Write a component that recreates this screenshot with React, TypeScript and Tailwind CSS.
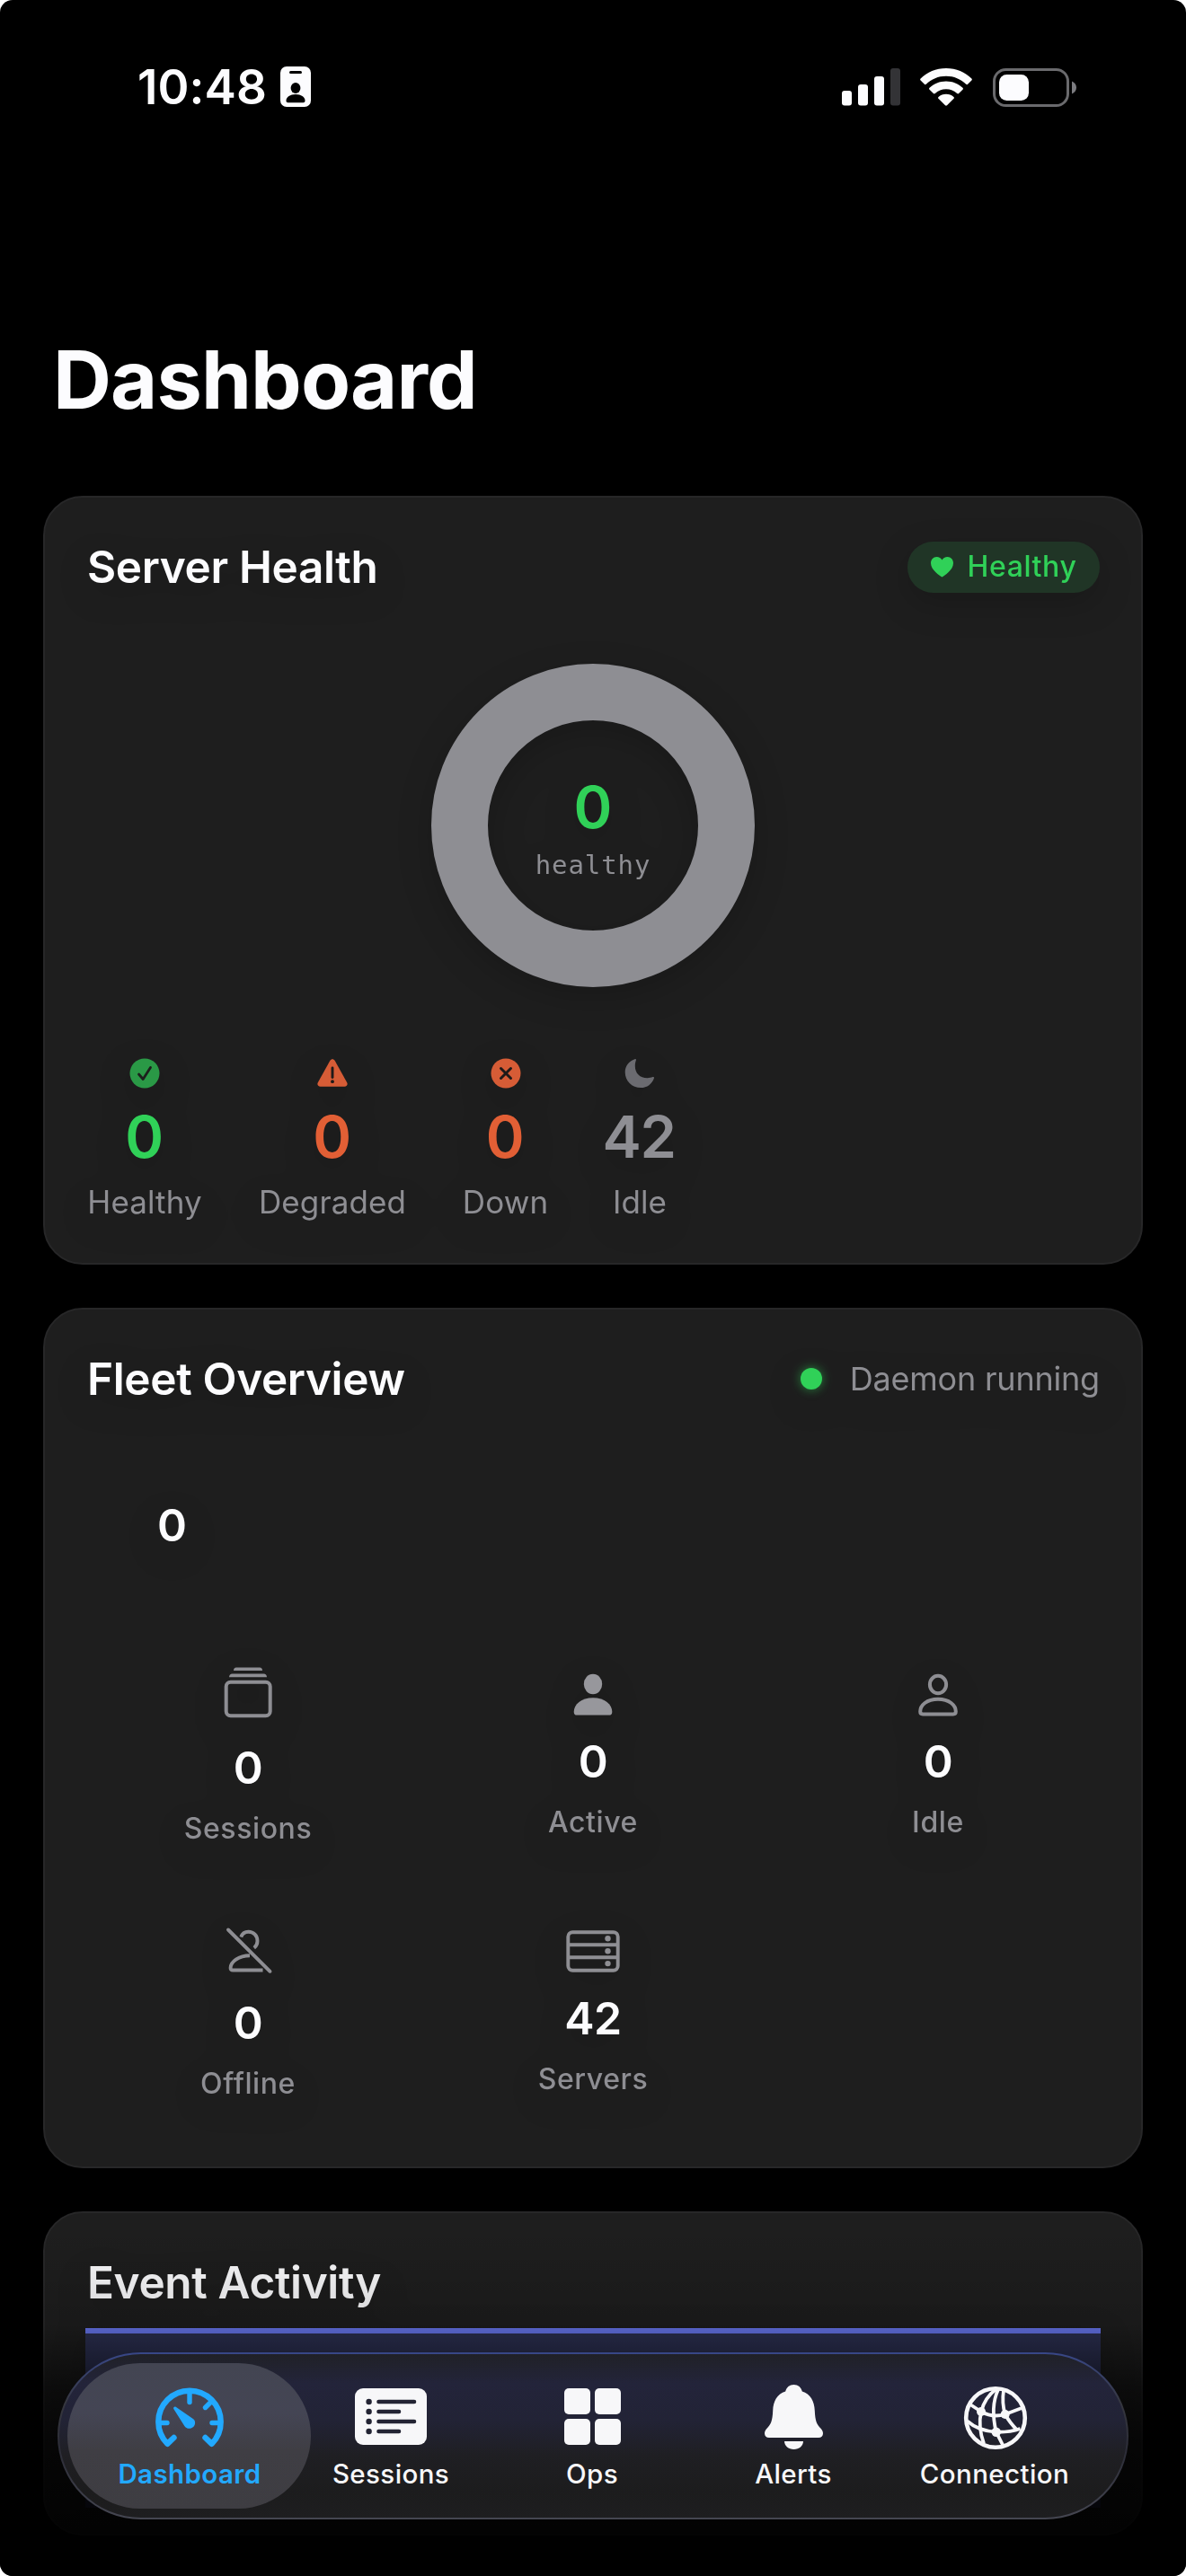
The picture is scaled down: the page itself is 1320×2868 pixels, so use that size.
import type { ReactNode } from 'react';

// Status bar icons
const BadgeIcon = () => (
  <svg width="34" height="46" viewBox="0 0 34 46">
    <rect width="34" height="45" rx="7" fill="#fcfcfe" />
    <rect x="10" y="5" width="14" height="3" rx="1.500" fill="#000" />
    <ellipse cx="17" cy="24" rx="5.400" ry="6" fill="#000" />
    <path d="M6.500 38c0-4 4.500-7 10.500-7s10.500 3 10.500 7c0 1.500-.8 2.200-2 2.200h-17c-1.200 0-2-.7-2-2.200z" fill="#000" />
  </svg>
);

const SignalIcon = () => (
  <svg width="65" height="42" viewBox="0 0 65 42">
    <rect x="0" y="25" width="11" height="16.500" rx="3" fill="#fcfcfe" />
    <rect x="18" y="18" width="11" height="23.500" rx="3" fill="#fcfcfe" />
    <rect x="36" y="9" width="11" height="32.500" rx="3" fill="#fcfcfe" />
    <rect x="54" y="0" width="11" height="41.500" rx="3" fill="#333336" />
  </svg>
);

const WifiIcon = () => (
  <svg width="58" height="42" viewBox="0 0 58 42" fill="#fcfcfe">
    <path d="M29 0C17.800 0 7.700 4.400 .6 11.500c-.6.6-.6 1.300 0 1.900l4.300 4.400c.6.6 1.300.6 1.900 0C12.500 12.200 20.300 8.800 29 8.800s16.500 3.400 22.200 9c.6.6 1.300.6 1.900 0l4.300-4.400c.6-.6.6-1.300 0-1.900C50.300 4.400 40.200 0 29 0z" />
    <path d="M29 14.500c-7.200 0-13.700 2.800-18.500 7.300-.6.6-.6 1.300 0 1.900l4.400 4.400c.6.6 1.200.6 1.900 0 3.200-3 7.500-4.800 12.200-4.800s9 1.800 12.200 4.800c.7.6 1.300.6 1.900 0l4.400-4.400c.6-.6.6-1.300 0-1.900-4.800-4.500-11.300-7.300-18.500-7.300z" />
    <path d="M29 28.800c-3.300 0-6.200 1.200-8.500 3.100-.6.5-.6 1.300 0 1.900l7.500 7.500c.6.6 1.400.6 2 0l7.500-7.500c.6-.6.6-1.400 0-1.900-2.300-1.900-5.200-3.100-8.500-3.100z" />
  </svg>
);

const BatteryIcon = () => (
  <svg width="93" height="43" viewBox="0 0 93 43">
    <rect x="1.500" y="1.500" width="82" height="40" rx="13" fill="none" stroke="#6a6a6d" strokeWidth="3" />
    <rect x="7" y="7" width="33" height="29" rx="8.500" fill="#fcfcfe" />
    <path d="M88 14.500c3 1.300 5 4 5 7s-2 5.700-5 7z" fill="#7c7c80" />
  </svg>
);

// Health row icons
const CheckCircle = () => (
  <svg width="34" height="34" viewBox="0 0 34 34">
    <circle cx="17" cy="17" r="16.500" fill="#2a9946" />
    <path d="M10.500 18l4.700 5.500 8.300-13" fill="none" stroke="#1c1f1c" strokeWidth="2.800" strokeLinecap="round" strokeLinejoin="round" />
  </svg>
);

const WarningTriangle = () => (
  <svg width="34" height="34" viewBox="0 0 34 34">
    <path d="M14.400 2.700c1.200-2.100 4-2.100 5.200 0l13.600 24.500c1.200 2.200-.3 4.600-2.700 4.600h-27c-2.400 0-3.900-2.400-2.700-4.600z" fill="#d65c36" />
    <path d="M17 11v10.500" stroke="#1e1a19" strokeWidth="2.900" strokeLinecap="round" />
    <circle cx="17" cy="26.200" r="1.900" fill="#1e1a19" />
  </svg>
);

const XCircle = () => (
  <svg width="34" height="34" viewBox="0 0 34 34">
    <circle cx="17" cy="17" r="16.500" fill="#d65c36" />
    <path d="M11.500 11.500l11 11M22.500 11.500l-11 11" stroke="#1e1a19" strokeWidth="3" strokeLinecap="round" />
  </svg>
);

const MoonIcon = () => (
  <svg width="34" height="34" viewBox="0 0 34 34">
    <path d="M11.500 1.200c.9-.4 1.700.3 1.400 1.300-.8 2.200-1.100 4-1.100 6.200 0 8.300 5.400 13.500 13.700 13.500 2.200 0 4.300-.4 6-1.100 1-.4 1.800.4 1.400 1.300C30.700 28.700 25.300 33 18.300 33 8.300 33 .7 25.500 .7 15.700c0-6.700 4.300-12.300 10.800-14.500z" fill="#6b6b70" />
  </svg>
);

// Fleet icons
const StackIcon = () => (
  <svg width="54" height="64" viewBox="0 0 54 64">
    <path d="M11 5c0-2 1-3.500 3-3.500h26c2 0 3 1.500 3 3.500zM6 12.200c0-2 1.500-3.700 3.500-3.700h35c2 0 3.500 1.700 3.500 3.700z" fill="#8e8e93" />
    <rect x="2.700" y="17.800" width="49" height="37.400" rx="5" fill="none" stroke="#8e8e93" strokeWidth="4" />
  </svg>
);

const PersonFill = () => (
  <svg width="44" height="50" viewBox="0 0 44 50" fill="#97979c">
    <ellipse cx="22" cy="13" rx="10.200" ry="11.200" />
    <path d="M.7 44C.7 35.500 9 28.200 22 28.200S43.300 35.500 43.300 44c0 2.500-1.200 3.600-3.600 3.600H4.300C1.900 47.600 .7 46.500 .7 44z" />
  </svg>
);

const PersonOutline = () => (
  <svg width="44" height="50" viewBox="0 0 44 50" fill="none" stroke="#8e8e93" strokeWidth="4">
    <ellipse cx="22" cy="13.500" rx="9.100" ry="9.700" />
    <path d="M2.200 43.500C2.200 36.500 9.500 29.800 22 29.800S41.800 36.500 41.800 43.500c0 2-.9 2.900-2.900 2.900H5.100C3.100 46.400 2.200 45.500 2.200 43.500z" />
  </svg>
);

const PersonSlash = () => (
  <svg width="56" height="60" viewBox="0 0 56 60" fill="none" stroke="#8e8e93" strokeWidth="3.900">
    <path d="M6 5.500l46.500 46.300" strokeLinecap="round" />
    <path d="M20.300 13.600C21.500 10 24.800 7.700 28.500 7.700c5.800 0 10 4.600 10 10.300 0 3.200-1.500 6-3.700 7.700" />
    <path d="M30 34.200C17.500 34.200 8.600 41.500 8.600 48c0 1.700 1 2.500 2.600 2.500H44.500" />
  </svg>
);

const ServerRack = () => (
  <svg width="60" height="50" viewBox="0 0 60 50" fill="none" stroke="#8e8e93" strokeWidth="3.900">
    <rect x="2.300" y="3.200" width="55.400" height="42.600" rx="5" />
    <path d="M2 17.300h56M2 31.200h56" />
    <g fill="#8e8e93" stroke="none">
      <circle cx="46.500" cy="10.300" r="3.200" />
      <circle cx="46.500" cy="24.200" r="3.200" />
      <circle cx="46.500" cy="38.100" r="3.200" />
    </g>
  </svg>
);

// Tab bar icons
const GaugeIcon = () => (
  <svg width="76" height="72" viewBox="0 -4 76 72" fill="none" stroke="#22a9ff" strokeWidth="6.400" strokeLinecap="round" strokeLinejoin="round">
    <path d="M20.500 55L13.300 61.800A34.700 34.700 0 1 1 62.700 61.800L55.500 55" />
    <path d="M38 5v10.500M72 38.500H63M4 38.500H13M61 16l-5.500 5.500" strokeWidth="5.400" />
    <path d="M22.700 20.700c-1.400-1-3.300.7-2.400 2.200L32.300 42c1.500 2.500 4.500 3.400 7.400 2.500 3.900-1.200 5.600-5.800 3.500-9.200-.4-.7-1-1.200-1.700-1.600z" fill="#22a9ff" stroke="none" />
  </svg>
);

const ListIcon = () => (
  <svg width="80" height="72" viewBox="0 -4 80 72">
    <rect width="80" height="63" rx="9" fill="#f7f7f9" />
    <g stroke="#232434" strokeWidth="4.600" strokeLinecap="round">
      <path d="M26.500 15h39.500M26.500 26h22.500M26.500 37h39.500M26.500 48h22.500" />
    </g>
    <g fill="#232434">
      <circle cx="15.600" cy="15" r="3.200" />
      <circle cx="15.600" cy="26" r="3.200" />
      <circle cx="15.600" cy="37" r="3.200" />
      <circle cx="15.600" cy="48" r="3.200" />
    </g>
  </svg>
);

const GridIcon = () => (
  <svg width="63" height="72" viewBox="0 -4 63 72" fill="#f7f7f9">
    <rect x="0" y="0" width="29" height="29" rx="5" />
    <rect x="34" y="0" width="29" height="29" rx="5" />
    <rect x="0" y="34" width="29" height="29" rx="5" />
    <rect x="34" y="34" width="29" height="29" rx="5" />
  </svg>
);

const BellIcon = () => (
  <svg width="65" height="72" viewBox="0 0 65 72" fill="#f7f7f9">
    <path d="M32.500 0c-4.800 0-8.300 3-9.300 7.600C14 10.500 9.600 18.500 9.200 29 8.700 40.500 7 44 2.500 48.700.9 50.400 0 52.300 0 54.300 0 57.200 1.900 59 5 59h55c3.100 0 5-1.800 5-4.700 0-2-.9-3.900-2.500-5.600C58 44 56.300 40.500 55.800 29 55.400 18.500 51 10.500 41.800 7.600 40.800 3 37.300 0 32.500 0z" />
    <path d="M22 63h21c0 5-4.600 9-10.500 9S22 68 22 63z" />
  </svg>
);

const NetworkGlobe = () => (
  <svg width="70" height="72" viewBox="-1 -2 70 72" fill="none" stroke="#f7f7f9" strokeWidth="3.800" className="overflow-visible">
    <circle cx="35" cy="35" r="32.800" strokeWidth="4.600" />
    <path d="M35.500 3C27 9.500 21.500 18 19 28M38 3.500C31.500 17 32 35 35.700 50.700M44 4.500C42.500 14 43 22 45.700 31" />
    <path d="M6 19.500L19 28C27 32.500 37 33.500 45.700 31L65.500 23.500" />
    <path d="M3.500 38.500C12 46 24 50 35.700 50.700C45 51 54 50 62.500 47" />
    <path d="M19 28C16.500 39 17.500 51 22 63.500M45.700 31C49.500 38 54 43.500 59.500 49M35.700 50.700L43.500 66" />
    <g fill="#f7f7f9" stroke="none">
      <circle cx="19" cy="28" r="5" />
      <circle cx="45.700" cy="31" r="5" />
      <circle cx="35.700" cy="50.700" r="5.200" />
    </g>
  </svg>
);

const healthStats = [
  { label: 'Healthy', value: 0, color: 'text-[#30d158]', width: 'w-[130px]', icon: <CheckCircle /> },
  { label: 'Degraded', value: 0, color: 'text-[#e25f35]', width: 'w-[166px]', icon: <WarningTriangle /> },
  { label: 'Down', value: 0, color: 'text-[#e25f35]', width: 'w-[97px]', icon: <XCircle /> },
  { label: 'Idle', value: 42, color: 'text-[#8e8e93]', width: 'w-[80px]', icon: <MoonIcon /> },
];

const fleetStats = [
  { label: 'Sessions', value: 0, icon: <StackIcon /> },
  { label: 'Active', value: 0, icon: <PersonFill /> },
  { label: 'Idle', value: 0, icon: <PersonOutline /> },
  { label: 'Offline', value: 0, icon: <PersonSlash /> },
  { label: 'Servers', value: 42, icon: <ServerRack /> },
];

const tabs = [
  { label: 'Dashboard', icon: <GaugeIcon />, active: true },
  { label: 'Sessions', icon: <ListIcon /> },
  { label: 'Ops', icon: <GridIcon /> },
  { label: 'Alerts', icon: <BellIcon /> },
  { label: 'Connection', icon: <NetworkGlobe /> },
];

function Card({ className, children }: { className: string; children: ReactNode }) {
  return (
    <section className={`mx-12 rounded-[44px] border-2 border-[#272728] bg-[#1e1e1e] px-[46px] pt-[46px] ${className}`}>
      <div className="drop-shadow-[0_12px_18px_rgba(0,0,0,0.18)]">{children}</div>
    </section>
  );
}

function CardTitle({ children }: { children: ReactNode }) {
  return (
    <h2 className="pl-px text-[49.500px] leading-[62px] font-semibold tracking-[-0.35px] whitespace-nowrap text-[#fcfcfe]">
      {children}
    </h2>
  );
}

export default function App() {
  return (
    <div className="bg-white">
      <div className="relative h-[2868px] w-[1320px] overflow-hidden rounded-[14px] bg-black font-['Inter',sans-serif]">
        {/* Status bar */}
        <div className="flex h-[194px] items-center justify-between pr-[122px] pl-[153px]">
          <div className="flex items-center gap-[15px]">
            <span className="text-[53px] leading-none font-semibold tracking-[0.1px] text-[#fcfcfe]">10:48</span>
            <BadgeIcon />
          </div>
          <div className="flex items-center">
            <SignalIcon />
            <div className="ml-[22px]"><WifiIcon /></div>
            <div className="ml-[23px]"><BatteryIcon /></div>
          </div>
        </div>

        <h1 className="mt-[169px] pl-[59px] text-[90px] leading-[120px] font-bold tracking-[-0.9px] text-[#fcfcfe]">
          Dashboard
        </h1>

        {/* Server health */}
        <Card className="mt-[69px] h-[856px]">
          <div className="flex h-[62px] items-center justify-between">
            <CardTitle>Server Health</CardTitle>
            <div className="flex h-[57px] w-[214px] items-center justify-center gap-[16px] rounded-full bg-[#203526]">
              <svg width="25" height="23" viewBox="0 0 25 23">
                <path d="M12.500 22.500C10 21 0 14.500 0 7 0 3 2.800 0 6.500 0c2.600 0 4.800 1.300 6 3.500C13.700 1.300 15.900 0 18.500 0 22.200 0 25 3 25 7c0 7.500-10 14-12.500 15.500z" fill="#30d158" />
              </svg>
              <span className="text-[32px] leading-none font-medium tracking-[0.6px] text-[#30d158]">Healthy</span>
            </div>
          </div>

          <div className="mx-auto mt-[77px] flex h-[360px] w-[360px] flex-col items-center rounded-full border-[63px] border-[#8e8e93] pt-[67px]">
            <span className="text-[65px] leading-[60px] font-semibold text-[#30d158]">0</span>
            <span className="mt-[14px] font-['DejaVu_Sans_Mono',monospace] text-[29px] leading-[40px] tracking-[0.9px] text-[#8e8e93]">healthy</span>
          </div>

          <div className="mt-[79px] flex gap-[61px]">
            {healthStats.map((stat) => (
              <div key={stat.label} className={`flex flex-col items-center ${stat.width}`}>
                {stat.icon}
                <span className={`mt-[24px] pr-[2px] text-[65px] leading-[60px] font-semibold tracking-[-1.5px] ${stat.color}`}>{stat.value}</span>
                <span className="mt-[22px] text-[35px] leading-[40px] tracking-[0.1px] text-[#8e8e93]">{stat.label}</span>
              </div>
            ))}
          </div>
        </Card>

        {/* Fleet overview */}
        <Card className="mt-12 h-[958px]">
          <div className="flex h-[62px] items-center justify-between">
            <CardTitle>Fleet Overview</CardTitle>
            <div className="flex items-center gap-[31px]">
              <div className="h-6 w-6 rounded-full bg-[#30d158] shadow-[0_0_12px_rgba(48,209,88,0.6)]" />
              <span className="text-[36px] leading-[40px] tracking-[-0.2px] text-[#8e8e93]">Daemon running</span>
            </div>
          </div>

          <div className="flex h-[264px] w-[191px] items-center justify-center">
            <span className="text-[50px] leading-[60px] font-semibold text-[#fcfcfe]">0</span>
          </div>

          <div className="mt-[25px] grid grid-cols-3 items-center gap-x-6 gap-y-[88px]">
            {fleetStats.map((stat) => (
              <div key={stat.label} className="flex flex-col items-center">
                {stat.icon}
                <span className="mt-[19px] text-[50px] leading-[60px] font-semibold tracking-[-0.5px] text-[#fcfcfe]">{stat.value}</span>
                <span className="mt-[18px] -mb-px text-[32px] leading-[40px] font-medium tracking-[0.6px] text-[#8e8e93]">{stat.label}</span>
              </div>
            ))}
          </div>
        </Card>

        {/* Event activity */}
        <Card className="mt-12 h-[361px]">
          <div className="flex h-[62px] items-center">
            <CardTitle>Event Activity</CardTitle>
          </div>
          <div className="-mx-px mt-[20px] h-[200px] border-t-[6px] border-[#6674ec] bg-[#2c3052]" />
        </Card>

        {/* Scroll edge fade under the tab bar */}
        <div className="absolute inset-x-0 bottom-0 h-[388px] bg-[linear-gradient(to_bottom,transparent_0%,rgba(0,0,0,0.15)_28%,rgba(0,0,0,0.6)_46%,rgba(0,0,0,0.8)_62%,rgba(0,0,0,0.9)_88%)]" />

        {/* Tab bar */}
        <nav className="absolute bottom-[63px] left-[64px] flex h-[186px] w-[1192px] justify-center rounded-full bg-[linear-gradient(to_bottom,#384788,#36373f_30%,#2c2d38_60%,#454651)] p-[2px]">
          <div className="flex h-full w-full justify-center rounded-full bg-[linear-gradient(to_bottom,#202127,#23243a_18%,#222336_40%,#1f1f23_62%,#1c1c1d_85%,#1e1e20)] pr-[2px]">
            {tabs.map((tab) => (
              <div key={tab.label} className="relative flex w-[224px] flex-col items-center pt-[34px]">
                {tab.active && (
                  <div className="absolute top-[10px] left-[-24px] h-[162px] w-[271px] rounded-full bg-[linear-gradient(to_bottom,#434552,#444554_35%,#3f3e44_60%,#3e3d42)]" />
                )}
                <div className="relative">{tab.icon}</div>
                <span
                  className={`relative mt-[9px] text-[29.500px] leading-[36px] tracking-[0.4px] ${
                    tab.active ? 'font-semibold text-[#22a9ff]' : 'font-medium text-[#f7f7f9]'
                  }`}
                >
                  {tab.label}
                </span>
              </div>
            ))}
          </div>
        </nav>
      </div>
    </div>
  );
}
